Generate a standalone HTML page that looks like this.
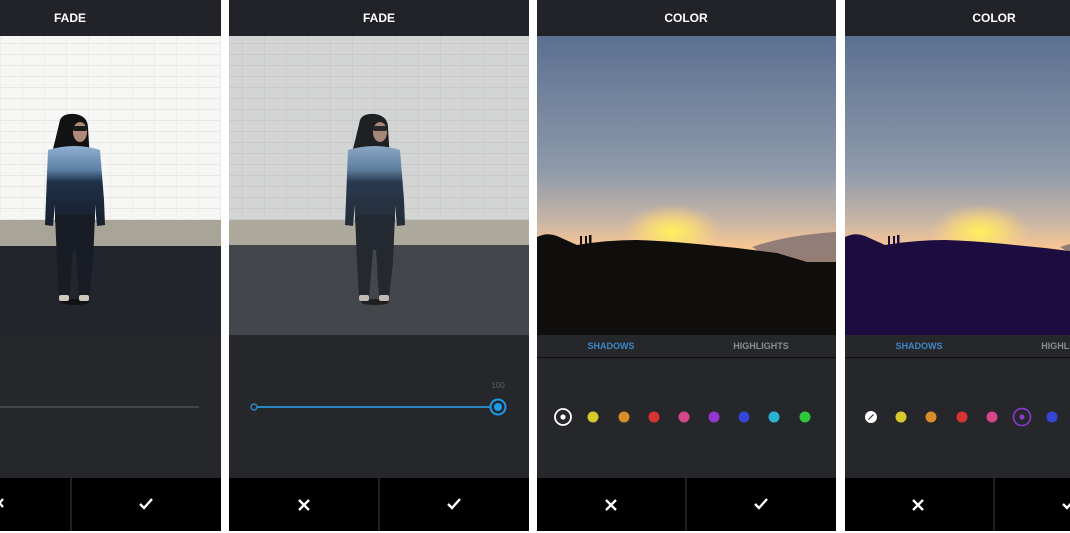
<!DOCTYPE html>
<html><head><meta charset="utf-8"><style>
html,body{margin:0;padding:0;background:#fff;width:1070px;height:533px;overflow:hidden}
svg{display:block}
text{font-family:"Liberation Sans",sans-serif}
</style></head><body>
<svg width="1070" height="533" viewBox="0 0 1070 533" xmlns="http://www.w3.org/2000/svg">
<defs>
<linearGradient id="sky" x1="0" y1="0" x2="0" y2="1">
<stop offset="0" stop-color="#5b7090"/>
<stop offset="0.45" stop-color="#8e9aab"/>
<stop offset="0.62" stop-color="#c8b5a6"/>
<stop offset="0.7" stop-color="#f5c594"/>
<stop offset="0.8" stop-color="#fdb868"/>
<stop offset="1" stop-color="#fdb868"/>
</linearGradient>
<radialGradient id="sun" cx="0.5" cy="0.5" r="0.5">
<stop offset="0" stop-color="#fff25a"/>
<stop offset="0.5" stop-color="#ffe070" stop-opacity="0.7"/>
<stop offset="1" stop-color="#ffd080" stop-opacity="0"/>
</radialGradient>
<linearGradient id="sweater" x1="0" y1="0" x2="0" y2="1">
<stop offset="0" stop-color="#8fb0d0"/>
<stop offset="0.3" stop-color="#5c7fa3"/>
<stop offset="0.45" stop-color="#1e3048"/>
<stop offset="1" stop-color="#17202c"/>
</linearGradient>
<pattern id="brick" width="22" height="11" patternUnits="userSpaceOnUse">
<rect width="22" height="11" fill="#f6f6f4"/>
<line x1="0" y1="10.5" x2="22" y2="10.5" stroke="#e2e2e0" stroke-width="0.8"/>
<line x1="0.5" y1="0" x2="0.5" y2="11" stroke="#ebebe9" stroke-width="0.8"/>
</pattern>
<pattern id="brick2" width="22" height="11" patternUnits="userSpaceOnUse">
<rect width="22" height="11" fill="#e6e6e4"/>
<line x1="0" y1="10.5" x2="22" y2="10.5" stroke="#d2d2d0" stroke-width="0.8"/>
<line x1="0.5" y1="0" x2="0.5" y2="11" stroke="#dadad8" stroke-width="0.8"/>
</pattern>
<g id="person">
<ellipse cx="0" cy="302" rx="14" ry="3" fill="#111"/>
<path d="M-15,120 Q-12,113 0,114 Q13,116 13,128 L15,160 L-28,172 Q-22,150 -15,120Z" fill="#121214"/>
<ellipse cx="5" cy="132" rx="7" ry="10" fill="#b08a78"/>
<rect x="-2" y="126" width="14" height="5" rx="2" fill="#1a1a1a"/>
<path d="M-27,150 Q0,142 25,150 L29,200 L30,225 L22,226 L20,205 L20,222 L-20,222 L-20,205 L-22,226 L-30,225 L-29,200Z" fill="url(#sweater)"/>
<path d="M-20,215 L20,215 L18,262 L14,298 L4,298 L1,250 L-2,250 L-6,298 L-16,298 L-18,262Z" fill="#181c24"/>
<rect x="-16" y="295" width="10" height="6" rx="2" fill="#cfc6bc"/>
<rect x="4" y="295" width="10" height="6" rx="2" fill="#cfc6bc"/>
</g>
<clipPath id="c1"><rect x="0" y="0" width="221" height="533"/></clipPath>
<clipPath id="c2"><rect x="229" y="0" width="300" height="533"/></clipPath>
<clipPath id="c3"><rect x="537" y="0" width="299" height="533"/></clipPath>
<clipPath id="c4"><rect x="845" y="0" width="225" height="533"/></clipPath>
<g id="sunimg">
<rect x="0" y="36" width="300" height="299" fill="url(#sky)"/>
<ellipse cx="135" cy="232" rx="50" ry="28" fill="url(#sun)"/>
<path d="M215,247 Q250,235 300,232 L300,265 L240,262Z" fill="#7a6c70" opacity="0.8"/>
<path d="M0,237 Q10,232 20,236 L40,245 Q70,240 100,240 Q130,241 160,244 L200,248 L240,253 L270,262 L300,262 L300,335 L0,335Z"/>
<rect x="43" y="236" width="2" height="9"/><rect x="48" y="236" width="2" height="9"/><rect x="52" y="235" width="2.5" height="10"/>
</g>
</defs>

<!-- Panel 1 -->
<g clip-path="url(#c1)">
<rect x="0" y="0" width="221" height="531" fill="#26272b"/>
<rect x="0" y="0" width="221" height="36" fill="#222328"/>
<rect x="0" y="36" width="221" height="185" fill="url(#brick)"/>
<rect x="0" y="220" width="221" height="28" fill="#a8a498"/>
<rect x="0" y="246" width="221" height="89" fill="#22252b"/>
<g transform="translate(75,0)"><use href="#person"/></g>
<text x="70" y="22" fill="#fff" font-size="12" font-weight="bold" text-anchor="middle">FADE</text>
<line x1="0" y1="407" x2="199" y2="407" stroke="#45464b" stroke-width="2"/>
<rect x="0" y="478" width="221" height="53" fill="#000"/>
<line x1="71" y1="478" x2="71" y2="531" stroke="#2a2a2a" stroke-width="1.5"/>
<path d="M-4,499 L3,507 M3,499 L-4,507" stroke="#fff" stroke-width="2.2"/>
<path d="M140,504 L144,508 L152,499" stroke="#fff" stroke-width="2.4" fill="none"/>
</g>

<!-- Panel 2 -->
<g clip-path="url(#c2)">
<rect x="229" y="0" width="300" height="531" fill="#26272b"/>
<rect x="229" y="0" width="300" height="36" fill="#222328"/>
<rect x="229" y="36" width="300" height="185" fill="url(#brick2)"/>
<rect x="229" y="220" width="300" height="27" fill="#b9b4a4"/>
<rect x="229" y="245" width="300" height="90" fill="#3c3f44"/>
<g transform="translate(375,0)"><use href="#person"/></g>
<rect x="229" y="36" width="300" height="299" fill="#6a7078" opacity="0.15"/>
<text x="379" y="22" fill="#fff" font-size="12" font-weight="bold" text-anchor="middle">FADE</text>
<text x="498" y="388" fill="#5a6470" font-size="8" text-anchor="middle">100</text>
<line x1="254" y1="407" x2="498" y2="407" stroke="#2a86c0" stroke-width="2"/>
<circle cx="254" cy="407" r="3" fill="#26272b" stroke="#2a86c0" stroke-width="1.5"/>
<circle cx="498" cy="407" r="7.5" fill="#26272b" stroke="#1e9be8" stroke-width="2"/>
<circle cx="498" cy="407" r="4" fill="#1e9be8"/>
<rect x="229" y="478" width="300" height="53" fill="#000"/>
<line x1="379" y1="478" x2="379" y2="531" stroke="#2a2a2a" stroke-width="1.5"/>
<path d="M299,500 L309,510 M309,500 L299,510" stroke="#fff" stroke-width="2.4"/>
<path d="M448,504 L452,508 L460,499" stroke="#fff" stroke-width="2.4" fill="none"/>
</g>

<!-- Panel 3 -->
<g clip-path="url(#c3)">
<rect x="537" y="0" width="300" height="531" fill="#26272b"/>
<rect x="537" y="0" width="300" height="36" fill="#222328"/>
<g transform="translate(537,0)"><use href="#sunimg" fill="#100e0c"/></g>
<text x="686" y="22" fill="#fff" font-size="12" font-weight="bold" text-anchor="middle">COLOR</text>
<text x="611" y="349" fill="#3e86c6" font-size="9" font-weight="bold" text-anchor="middle">SHADOWS</text>
<text x="761" y="349" fill="#8a8c90" font-size="9" font-weight="bold" text-anchor="middle">HIGHLIGHTS</text>
<line x1="537" y1="357.5" x2="837" y2="357.5" stroke="#0e0e10" stroke-width="1"/>
<circle cx="563" cy="417" r="8" fill="none" stroke="#fff" stroke-width="1.8"/>
<circle cx="563" cy="417" r="2.6" fill="#fff"/>
<circle cx="593" cy="417" r="5.5" fill="#d7c92c"/>
<circle cx="624" cy="417" r="5.5" fill="#d98d2c"/>
<circle cx="654" cy="417" r="5.5" fill="#d83232"/>
<circle cx="684" cy="417" r="5.5" fill="#d5468a"/>
<circle cx="714" cy="417" r="5.5" fill="#9236d0"/>
<circle cx="744" cy="417" r="5.5" fill="#3346d6"/>
<circle cx="774" cy="417" r="5.5" fill="#2ab2d4"/>
<circle cx="805" cy="417" r="5.5" fill="#2ec83e"/>
<rect x="537" y="478" width="300" height="53" fill="#000"/>
<line x1="686" y1="478" x2="686" y2="531" stroke="#2a2a2a" stroke-width="1.5"/>
<path d="M606,500 L616,510 M616,500 L606,510" stroke="#fff" stroke-width="2.4"/>
<path d="M755,504 L759,508 L767,499" stroke="#fff" stroke-width="2.4" fill="none"/>
</g>

<!-- Panel 4 -->
<g clip-path="url(#c4)">
<rect x="845" y="0" width="300" height="531" fill="#26272b"/>
<rect x="845" y="0" width="300" height="36" fill="#222328"/>
<g transform="translate(845,0)"><use href="#sunimg" fill="#1c0c40"/></g>
<text x="994" y="22" fill="#fff" font-size="12" font-weight="bold" text-anchor="middle">COLOR</text>
<text x="919" y="349" fill="#3e86c6" font-size="9" font-weight="bold" text-anchor="middle">SHADOWS</text>
<text x="1069" y="349" fill="#8a8c90" font-size="9" font-weight="bold" text-anchor="middle">HIGHLIGHTS</text>
<line x1="845" y1="357.5" x2="1070" y2="357.5" stroke="#0e0e10" stroke-width="1"/>
<circle cx="871" cy="417" r="6" fill="#fff"/>
<line x1="868.5" y1="419.5" x2="873.5" y2="414.5" stroke="#333" stroke-width="1.2"/>
<circle cx="901" cy="417" r="5.5" fill="#d7c92c"/>
<circle cx="931" cy="417" r="5.5" fill="#d98d2c"/>
<circle cx="962" cy="417" r="5.5" fill="#d83232"/>
<circle cx="992" cy="417" r="5.5" fill="#d5468a"/>
<circle cx="1022" cy="417" r="8.5" fill="none" stroke="#8a3ad0" stroke-width="1.6"/>
<circle cx="1022" cy="417" r="2.6" fill="#8a3ad0"/>
<circle cx="1052" cy="417" r="5.5" fill="#3346d6"/>
<rect x="845" y="478" width="300" height="53" fill="#000"/>
<line x1="994" y1="478" x2="994" y2="531" stroke="#2a2a2a" stroke-width="1.5"/>
<path d="M913,500 L923,510 M923,500 L913,510" stroke="#fff" stroke-width="2.4"/>
<path d="M1063,504 L1067,508 L1075,499" stroke="#fff" stroke-width="2.4" fill="none"/>
</g>
</svg>
</body></html>
